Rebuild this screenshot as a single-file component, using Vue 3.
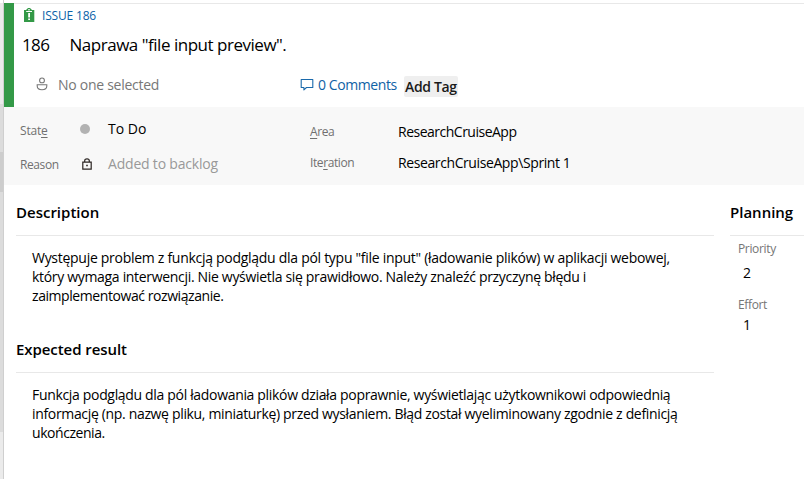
<script setup>
const description = [
  { text: 'Występuje problem z funkcją podglądu dla pól typu "file input" (ładowanie plików) w aplikacji webowej,', fit: 'd1' },
  { text: 'który wymaga interwencji. Nie wyświetla się prawidłowo. Należy znaleźć przyczynę błędu i', fit: 'd2' },
  { text: 'zaimplementować rozwiązanie.', fit: 'd3' }
]
const expected = [
  { text: 'Funkcja podglądu dla pól ładowania plików działa poprawnie, wyświetlając użytkownikowi odpowiednią', fit: 'e1' },
  { text: 'informację (np. nazwę pliku, miniaturkę) przed wysłaniem. Błąd został wyeliminowany zgodnie z definicją', fit: 'e2' },
  { text: 'ukończenia.', fit: 'e3' }
]
</script>

<template>
  <div class="page">
    <div class="gutter"><i class="thumb"></i></div>
    <main class="form">
      <header class="head">
        <div class="crumb">
          <svg class="clip" width="12" height="14" viewBox="0 0 12 14">
            <path d="M1 2H3.5V1H4.5V0H7.5V1H8.5V2H11.3V14H1Z" fill="#339947" />
            <path d="M3.2 3.5H9M5 1.8h2" stroke="#fff" stroke-width="1" />
            <path d="M6.1 5V9.5M6.1 10.5V12" stroke="#fff" stroke-width="1.8" />
          </svg>
          <span class="issue">ISSUE 186</span>
        </div>
        <div class="title"><span class="num">186</span><span class="name">Naprawa "file input preview".</span></div>
        <div class="meta">
          <svg class="person" width="12" height="14" viewBox="0 0 12 14" fill="none" stroke="#777" stroke-width="1.1">
            <circle cx="6" cy="3.4" r="2.4" />
            <path d="M1.2 7.7H10.8V9C10.8 11.5 9 12.7 6 12.7S1.2 11.5 1.2 9Z" />
          </svg>
          <span class="nobody">No one selected</span>
          <svg class="bubble" width="14" height="13" viewBox="0 0 14 13" fill="none" stroke="#1a69ab" stroke-width="1.1">
            <path d="M1.2 1.5H12.8V9.5H6.5L3.9 11.9V9.5H1.2Z" stroke-linejoin="round" />
          </svg>
          <span class="comments">0 Comments</span>
          <span class="tag">Add Tag</span>
        </div>
      </header>
      <section class="fields">
        <div class="col left">
          <div class="row"><label class="lb-state">Stat<u>e</u></label><i class="dot"></i><span class="todo">To Do</span></div>
          <div class="row reason"><label class="lb-reason">Reason</label>
            <svg class="lock" width="10" height="12" viewBox="0 0 10 12" fill="none" stroke="#2b2522" stroke-width="1.2">
              <path d="M.8 4.2H9.2V11.2H.8ZM2.7 4V2.8C2.7 .2 7.3 .2 7.3 2.8V4" />
              <path d="M4.2 7.5H5.8" stroke-width="1.6" />
            </svg>
            <span class="added">Added to backlog</span></div>
        </div>
        <div class="col right">
          <div class="row"><label class="lb-area"><u>A</u>rea</label><span class="area">ResearchCruiseApp</span></div>
          <div class="row iteration"><label class="lb-iter">Ite<u>r</u>ation</label><span class="iter">ResearchCruiseApp\Sprint 1</span></div>
        </div>
      </section>
      <div class="body">
        <div class="text">
          <h2><span class="h-desc">Description</span></h2>
          <div class="para"><p v-for="l in description" :key="l.fit"><span :class="l.fit">{{ l.text }}</span></p></div>
          <h2 class="second"><span class="h-exp">Expected result</span></h2>
          <div class="para"><p v-for="l in expected" :key="l.fit"><span :class="l.fit">{{ l.text }}</span></p></div>
        </div>
        <aside class="planning">
          <h2><span class="h-plan">Planning</span></h2>
          <div class="plabel prio">Priority</div>
          <div class="pvalue two">2</div>
          <div class="plabel eff">Effort</div>
          <div class="pvalue one">1</div>
        </aside>
      </div>
    </main>
  </div>
</template>

<style>
body { margin: 0; background: #fff; overflow: hidden; }
</style>

<style scoped>
* { box-sizing: border-box; }
.page { display: flex; width: 804px; height: 479px; overflow: hidden; font-family: "Open Sans", "Noto Sans", sans-serif; font-size: 14px; color: #000; white-space: nowrap; }
.gutter { width: 4px; flex: none; background: linear-gradient(#fff 0 3px, #eaeaea 3px 104px, #dcdcdc 104px 432px, #ebebeb 432px); border-right: 1px solid #cfcfcf; }
.thumb { display: block; height: 40px; margin-top: 152px; background: #cdcdcd; }
.form { width: 800px; flex: none; padding-top: 3px; }
.head { height: 104px; border-left: 10px solid #339947; background: linear-gradient(#e8e8e8 0 1px, #fff 1px); padding-left: 9px; }
.crumb { display: flex; align-items: center; height: 24px; }
.issue { margin-left: 7px; font-size: 12px; color: #0b62a8; letter-spacing: -0.18px; }
.title { display: flex; height: 36px; line-height: 36px; font-size: 17px; }
.num { width: 47px; margin-left: -1px; margin-right: 1px; letter-spacing: -0.6px; }
.name { letter-spacing: -0.48px; margin-left: -0.5px; }
.meta { display: flex; align-items: center; height: 43px; }
.person { margin-left: 13px; margin-top: -2px; }
.nobody { width: 242px; margin-left: 10px; margin-top: -1px; color: #777; letter-spacing: -0.27px; }
.comments { margin-left: 4px; margin-top: 0; width: 86px; color: #0f62a5; letter-spacing: -0.42px; }
.tag { width: 54px; height: 21px; line-height: 21px; background: #efefef; border-radius: 2px; font-weight: 600; margin-top: 4px; padding-left: 1px; letter-spacing: -0.35px; color: #1a1a1a; }
.fields { display: flex; height: 78px; background: #f8f8f8; }
.col { width: 290px; padding-left: 16px; padding-top: 11px; }
.right { padding-top: 12px; }
.row { display: flex; align-items: center; height: 24px; }
.left .row { position: relative; }
.reason { margin-top: 10px; }
.iteration { margin-top: 7px; }
label { width: 60px; font-size: 12px; color: #707070; letter-spacing: -0.4px; }
.lb-state { letter-spacing: -0.2px; }
.right label { width: 88px; }
.dot { width: 10px; height: 10px; border-radius: 50%; background: #b2b2b2; margin-right: 18px; margin-top: -2px; }
.todo { margin-top: -3px; }
.lock { margin-left: 2px; margin-right: 16px; margin-top: -1px; }
.added { color: #999; letter-spacing: -0.2px; margin-top: -1px; }
.area { letter-spacing: -0.5px; }
.iter { letter-spacing: -0.4px; }
u { text-underline-offset: 2px; }
.body { display: flex; padding-left: 12px; gap: 16px; }
.text { width: 698px; flex: none; }
.planning { width: 90px; flex: none; }
h2 { margin: 0; height: 51px; line-height: 55px; border-bottom: 1px solid #e8e8e8; font-size: 15px; font-weight: 600; }
.h-exp { letter-spacing: -0.07px; }
.para { padding: 12px 0 0 16px; height: 86px; }
p { margin: 0; height: 19px; line-height: 19px; }
.d1 { letter-spacing: -0.284px; }
.d2 { letter-spacing: -0.318px; }
.d3 { letter-spacing: -0.43px; }
.e1 { letter-spacing: -0.327px; }
.e2 { letter-spacing: -0.335px; }
.e3 { letter-spacing: -0.45px; }
.plabel { padding-left: 8px; font-size: 12px; color: #757575; height: 20px; line-height: 20px; margin-top: 3px; letter-spacing: -0.35px; }
.pvalue { padding-left: 13px; height: 20px; line-height: 20px; }
.two { margin-top: 4px; }
.eff { margin-top: 12px; }
</style>
